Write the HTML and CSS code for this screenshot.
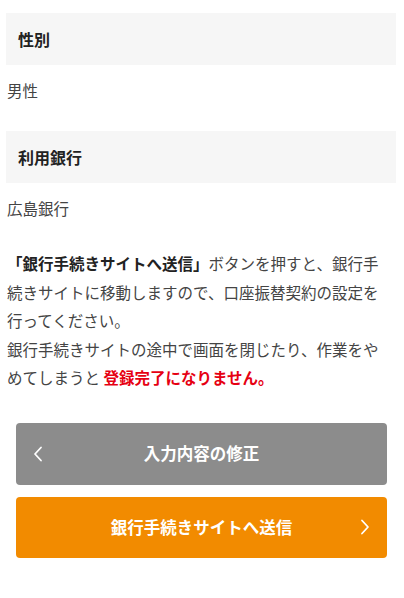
FILE: index.html
```html
<!DOCTYPE html>
<html lang="ja">
<head>
<meta charset="utf-8">
<link rel="stylesheet" href="styles.css">
</head>
<body>
<main class="page">
  <section class="field">
    <h2 class="field-label">性別</h2>
    <p class="field-value">男性</p>
  </section>
  <section class="field">
    <h2 class="field-label">利用銀行</h2>
    <p class="field-value">広島銀行</p>
  </section>
  <p class="notice"><strong class="quote">「銀行手続きサイトへ送信」</strong>ボタンを押すと、銀行手続きサイトに移動しますので、口座振替契約の設定を行ってください。<br>銀行手続きサイトの途中で画面を閉じたり、作業をやめてしまうと <strong class="warn">登録完了になりません。</strong></p>
  <div class="actions">
    <button class="btn btn-back" type="button">
      <svg class="chev chev-left" viewBox="0 0 10 16" width="10" height="16"><polyline points="8,1.5 2,8 8,14.5" fill="none" stroke="#fff" stroke-width="1.8" stroke-linecap="round" stroke-linejoin="round"/></svg>
      <span class="btn-text">入力内容の修正</span>
      <span class="spacer"></span>
    </button>
    <button class="btn btn-send" type="button">
      <span class="spacer"></span>
      <span class="btn-text">銀行手続きサイトへ送信</span>
      <svg class="chev chev-right" viewBox="0 0 10 16" width="10" height="16"><polyline points="2,1.5 8,8 2,14.5" fill="none" stroke="#fff" stroke-width="1.8" stroke-linecap="round" stroke-linejoin="round"/></svg>
    </button>
  </div>
</main>
</body>
</html>
```
FILE: styles.css
```css
* { box-sizing: border-box; }
html, body { margin: 0; padding: 0; background: #fff; }
body {
  font-family: "Noto Sans CJK JP", "Noto Sans", sans-serif;
  color: #333;
}
.page {
  padding: 13px 8px 0 6px;
}
.field-label {
  margin: 0;
  height: 52px;
  display: flex;
  align-items: center;
  padding: 0 12px;
  background: #f6f6f6;
  font-size: 16px;
  font-weight: 700;
  color: #222;
}
.field-value {
  margin: 14px 0 30px 1px;
  font-size: 15.5px;
  line-height: 22px;
  color: #444;
}
.notice {
  margin: 0 0 0 1px;
  width: 380px;
  font-size: 15.5px;
  line-height: 28.5px;
  color: #444;
}
.quote { color: #222; font-weight: 700; }
.warn { color: #e60012; font-weight: 700; }
.actions {
  margin: 31px 9px 0 10px;
  display: flex;
  flex-direction: column;
  gap: 12px;
}
.btn {
  display: grid;
  grid-template-columns: 1fr auto 1fr;
  align-items: center;
  height: 62px;
  border: 0;
  border-radius: 4px;
  padding: 0 17px;
  font-family: inherit;
  font-size: 16.5px;
  font-weight: 700;
  color: #fff;
}
.btn-back { background: #8c8c8c; }
.btn-send { background: #f28b00; height: 61px; }
.chev-left { justify-self: start; }
.chev-right { justify-self: end; }
.btn-text { line-height: 1; }
```
